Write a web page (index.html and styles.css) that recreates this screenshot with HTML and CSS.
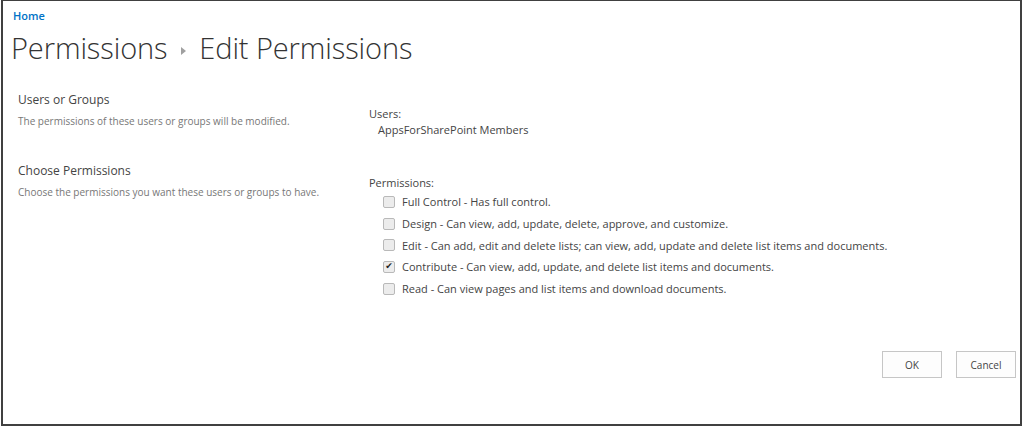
FILE: index.html
```html
<!DOCTYPE html>
<html>
<head>
	<title>Edit Permissions</title>
	<meta http-equiv="Content-Type" content="text/html; charset=UTF-8">
	<link rel="stylesheet" href="styles.css">
</head>
<body>
	<div id="frame">
		<div id="breadcrumb"><a href="#">Home</a></div>
		<h1 id="page-title">Permissions <span class="crumb-arrow"></span> Edit Permissions</h1>

		<div id="form-grid">
			<div class="section-info">
				<div class="section-title">Users or Groups</div>
				<div class="section-desc">The permissions of these users or groups will be modified.</div>
			</div>
			<div class="section-body users-body">
				<div class="field-label">Users:</div>
				<div class="field-value">AppsForSharePoint Members</div>
			</div>

			<div class="section-info">
				<div class="section-title">Choose Permissions</div>
				<div class="section-desc">Choose the permissions you want these users or groups to have.</div>
			</div>
			<div class="section-body perms-body">
				<div class="field-label">Permissions:</div>
				<div class="perm-list">
					<label class="perm"><input type="checkbox"/> Full Control - Has full control.</label>
					<label class="perm"><input type="checkbox"/> Design - Can view, add, update, delete, approve, and customize.</label>
					<label class="perm"><input type="checkbox"/> Edit - Can add, edit and delete lists; can view, add, update and delete list items and documents.</label>
					<label class="perm"><input type="checkbox" checked/> Contribute - Can view, add, update, and delete list items and documents.</label>
					<label class="perm"><input type="checkbox"/> Read - Can view pages and list items and download documents.</label>
				</div>
			</div>
		</div>

		<div id="button-bar">
			<input type="button" value="OK"/>
			<input type="button" value="Cancel"/>
		</div>
	</div>
</body>
</html>
```

FILE: styles.css
```css
html, body {
	margin: 0;
	padding: 0;
	background: #fff;
}
body {
	font-family: "Open Sans", "Noto Sans", sans-serif;
	color: #444;
}
#frame {
	margin-left: 1px;
	width: 1021px;
	height: 426px;
	border: 2px solid #404040;
	border-top-width: 1px;
	box-sizing: border-box;
	display: flex;
	flex-direction: column;
	padding: 8px 0 0 10px;
}
#breadcrumb {
	font-size: 11px;
	font-weight: 600;
	line-height: 14px;
}
#breadcrumb a {
	color: #0072c6;
	text-decoration: none;
}
#page-title {
	margin: 7px 0 0 -2px;
	font-size: 29px;
	font-weight: 300;
	line-height: 36px;
	color: #333;
	letter-spacing: -0.1px;
}
.crumb-arrow {
	display: inline-block;
	width: 0;
	height: 0;
	border-top: 4px solid transparent;
	border-bottom: 4px solid transparent;
	border-left: 5px solid #a0a0a0;
	vertical-align: middle;
	margin: 0 6px 0 6px;
}
#form-grid {
	display: grid;
	grid-template-columns: 351px 1fr;
	margin-top: 26px;
	padding-left: 5px;
}
.section-title {
	font-size: 12px;
	line-height: 16px;
	color: #444;
}
.section-desc {
	margin-top: 6px;
	font-size: 10px;
	line-height: 14px;
	color: #777;
}
.section-body {
	font-size: 11px;
	color: #444;
}
.field-label {
	line-height: 16px;
}
.users-body {
	padding-top: 14px;
	height: 57px;
}
.field-value {
	margin-left: 9px;
	line-height: 16px;
}
.perms-body {
	padding-top: 12px;
}
.perm-list {
	display: flex;
	flex-direction: column;
	padding-left: 14px;
}
.perm {
	display: flex;
	align-items: center;
	gap: 7px;
	height: 21.7px;
}
.perm input {
	-webkit-appearance: none;
	appearance: none;
	margin: 0;
	width: 12px;
	height: 12px;
	box-sizing: border-box;
	background: #ececec;
	border: 1px solid #b9b9b9;
	border-radius: 2px;
	display: flex;
	align-items: center;
	justify-content: center;
}
.perm input:checked::after {
	content: "\2714";
	font-family: "DejaVu Sans", sans-serif;
	font-size: 9px;
	line-height: 9px;
	color: #222;
}
#button-bar {
	display: flex;
	justify-content: flex-end;
	gap: 14px;
	margin-top: auto;
	margin-bottom: 46px;
	padding-right: 4px;
}
input[type="button"] {
	width: 60px;
	height: 27px;
	font-family: "Open Sans", "Noto Sans", sans-serif;
	font-size: 10px;
	color: #444;
	background: #fdfdfd;
	border: 1px solid #c6c6c6;
	padding: 0;
}
```
